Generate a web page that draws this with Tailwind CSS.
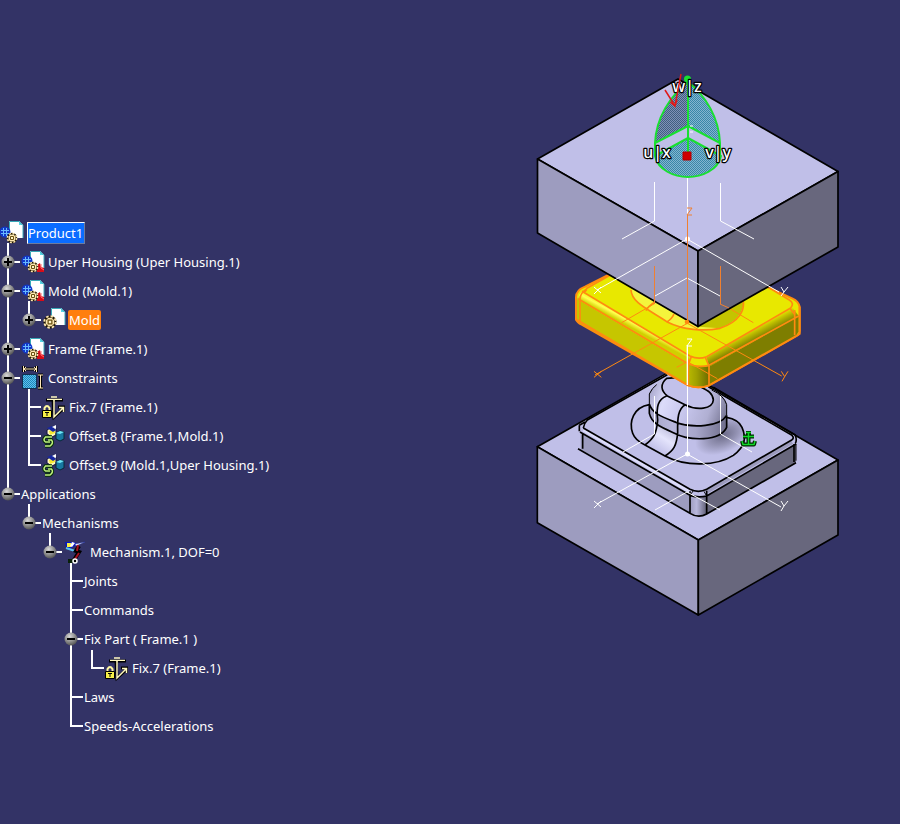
<!DOCTYPE html>
<html lang="en">
<head>
<meta charset="utf-8">
<title>Product1</title>
<script src="https://cdn.jsdelivr.net/npm/@tailwindcss/browser@4"></script>
</head>
<body class="bg-[#333366] text-white text-[13px] leading-5 font-['Noto_Sans',sans-serif]">
<!-- Shared tree glyphs -->
<svg class="absolute w-0 h-0" aria-hidden="true">
  <defs>
    <radialGradient id="ball" cx=".4" cy=".3" r=".75"><stop offset="0" stop-color="#d8d8d8"/><stop offset=".55" stop-color="#8c8c8c"/><stop offset="1" stop-color="#4a4a4a"/></radialGradient>
    <pattern id="dots" width="2" height="2" patternUnits="userSpaceOnUse"><path d="M0 0h2v2H0z" fill="#58c4f0"/><path d="M0 0h1v1H0zM1 1h1v1H1z" fill="#2484b8"/></pattern>
    <g id="page"><path d="M9 3h10l4 4v13H9z" fill="#fff"/><path d="M19 3v4h4z" fill="#58d8e8"/><path d="M9.500 20V3.500H19L23 7.500V20" fill="none" stroke="#38a8b8"/></g>
    <g id="cog">
      <circle r="5.200" fill="#221800"/><circle r="4.600" fill="none" stroke="#ffe8b0" stroke-width="1.500" stroke-dasharray="2 1.600"/>
      <circle r="3.500" fill="#ffe8b0"/><path d="M-1.500-1.500h3v3h-3z" fill="#fff4c8" stroke="#6a5010"/>
    </g>
    <g id="bluecog"><circle r="5.500" fill="#1238c8"/><path d="M-4-1.500h8M-4 1.500h8M-1.500-4v8M1.500-4v8" stroke="#68b8ff" stroke-width="1"/></g>
    <g id="i-product"><use href="#page"/><use href="#bluecog" x="5" y="14"/><use href="#cog" x="12" y="20"/></g>
    <g id="i-comp"><use href="#page" y="1"/><use href="#bluecog" x="6" y="14"/><path d="M16 18l3-2 1 4 3 1v4h-7z" fill="#d80c18"/><path d="M20 17v4l3 2" stroke="#ff7070" fill="none"/><use href="#cog" x="12" y="20"/></g>
    <g id="i-part"><use href="#page"/><use href="#cog" transform="translate(8 17) scale(1.250)"/></g>
    <g id="i-cons"><path d="M2.500 3v6M15.500 3v6M3 6h12" stroke="#000" stroke-width="3"/><path d="M2.500 3v6M15.500 3v6M3 6h12M5 4l-2 2 2 2M13 4l2 2-2 2" stroke="#ffe8b8" fill="none"/><path d="M1.500 11.500h14v14h-14z" fill="url(#dots)" stroke="#103050"/><path d="M17 12h5M17 25h5M19.500 12v13" stroke="#000" stroke-width="3"/><path d="M17 12h5M17 25h5M19.500 12v13" stroke="#ffe8b8"/></g>
    <g id="i-fix"><path d="M11 8L12 25l9-8" fill="none" stroke="#000" stroke-width="3"/><path d="M4 8h17M16 15h5.500v5" stroke="#000" stroke-width="3" fill="none"/><path d="M5 7.500h15M12 7v18l9-9M17 15.500h4.500V20M9 5h6" fill="none" stroke="#fff8c0" stroke-width="1.500"/><path d="M4 8.500h7M13 8.500h8" stroke="#000"/><path d="M2.500 18v-2q2.500-4 5 0v2" fill="none" stroke="#fff8a0" stroke-width="2"/><path d="M.5 18.500h9v7h-9z" fill="#f8f048" stroke="#000"/><path d="M5 20v4M3 20.500h4" stroke="#000"/></g>
    <g id="i-off"><path d="M5 9l5-3 4 1v7l-4 2-5-3z" fill="#fff8c0" stroke="#101040"/><path d="M7 10l6-2v4l-5 2z" fill="#f8e830"/><path d="M5 7l5-2 4 4-3 2z" fill="#1828a0"/><path d="M10 6l4-2v4z" fill="#fff"/><path d="M14 12l4-2 4 1v7l-4 2-4-2z" fill="#1878a0" stroke="#062838"/><path d="M14 12l4-2 4 1-4 2z" fill="#70e8f8"/><path d="M10 16H3.500q-3 3 0 5H8M3 25h5q4-3 1.500-6H6" fill="none" stroke="#083008" stroke-width="3.500"/><path d="M10 16H3.500q-3 3 0 5H8M3 25h5q4-3 1.500-6H6" fill="none" stroke="#c0f080" stroke-width="1.500"/></g>
    <g id="i-mech"><path d="M2 5h9l4 2-8 5-4-2z" fill="#0818c0"/><path d="M4 6h4v4H4z" fill="#f8f040"/><path d="M9 5l3 1-3 4-2-1z" fill="#fff"/><path d="M12 7l10-2-9 4z" fill="#fff" stroke="#2030a0" stroke-width=".5"/><path d="M3 11l12 4" stroke="#58c0f0" stroke-width="2"/><path d="M16 9l-3 5 3 1-5 8" fill="none" stroke="#000" stroke-width="4"/><path d="M15 8l-1 6M16 16l-4 6" stroke="#a81020" stroke-width="2"/><path d="M5 22h5v4H5z" fill="#082008"/><circle cx="12" cy="24" r="2" fill="#000" stroke="#fff" stroke-width="1.500"/></g>
  </defs>
</svg>

<main class="flex min-h-screen items-start justify-between">
  <ul id="tree" role="tree" aria-label="Specification tree" class="shrink-0 pt-[218px]"></ul>

  <!-- Viewport: upper housing, mold and frame, exploded along z -->
  <svg role="img" aria-label="Exploded mold assembly" class="mt-15 mr-10 w-[340px] shrink-0" viewBox="520 60 340 570">
    <defs>
      <linearGradient id="core" x1="0" x2="1"><stop offset="0" stop-color="#a4a3c8"/><stop offset=".3" stop-color="#b8b7dc"/><stop offset=".6" stop-color="#a8a7ca"/><stop offset="1" stop-color="#6e6d8a"/></linearGradient>
      <linearGradient id="dome" gradientUnits="userSpaceOnUse" x1="360" y1="60" x2="595" y2="150"><stop offset="0" stop-color="#a8a7cc"/><stop offset=".2" stop-color="#dcdcfa"/><stop offset=".5" stop-color="#c4c3ea"/><stop offset=".75" stop-color="#b0afd2"/><stop offset="1" stop-color="#6c6b88"/></linearGradient>
      <radialGradient id="flange" gradientUnits="userSpaceOnUse" cx="0" cy="0" r="1" gradientTransform="translate(580 195) rotate(-25) scale(90 52)"><stop offset="0" stop-color="#6c6b88"/><stop offset=".5" stop-color="#9493b4"/><stop offset="1" stop-color="#c0bfe8"/></radialGradient>
      <linearGradient id="sweep" gradientUnits="userSpaceOnUse" x1="350" y1="225" x2="405" y2="140"><stop offset="0" stop-color="#c0bfe8"/><stop offset=".45" stop-color="#e4e4fc"/><stop offset="1" stop-color="#a4a3c8"/></linearGradient>
      <linearGradient id="corner" x1="0" x2="1"><stop offset="0" stop-color="#9d9cbf"/><stop offset=".4" stop-color="#b8b7dc"/><stop offset="1" stop-color="#5f5e74"/></linearGradient>
      <linearGradient id="ycorner" x1="0" x2="1"><stop offset="0" stop-color="#b8b800"/><stop offset=".4" stop-color="#a0a000"/><stop offset="1" stop-color="#6c6c00"/></linearGradient>
      <linearGradient id="yl" gradientUnits="userSpaceOnUse" x1="230" y1="178" x2="216" y2="204"><stop offset="0" stop-color="#ecec00"/><stop offset=".5" stop-color="#ffff50"/><stop offset="1" stop-color="#d0d000"/></linearGradient>
      <linearGradient id="yr" gradientUnits="userSpaceOnUse" x1="564" y1="212" x2="580" y2="242"><stop offset="0" stop-color="#e8e800"/><stop offset=".5" stop-color="#b4b400"/><stop offset="1" stop-color="#848400"/></linearGradient>
      <pattern id="teal" width="2" height="2" patternUnits="userSpaceOnUse"><path d="M0 0h2v2H0z" fill="#84b4d0"/><path d="M0 0h1v1H0zM1 1h1v1H1z" fill="#3888a8"/></pattern>
      <pattern id="slate" width="2" height="2" patternUnits="userSpaceOnUse"><path d="M0 0h2v2H0z" fill="#8090b8"/><path d="M0 0h1v1H0zM1 1h1v1H1z" fill="#406080"/></pattern>
    </defs>

    <!-- Frame -->
    <g transform="translate(530 370) scale(.33333)" stroke="#000" stroke-width="5" stroke-linejoin="round" fill="none">
      <path d="M22 230L443-8 924 270 505 510z" fill="#c0bfe8"/>
      <path d="M22 230L505 510V735L22 458z" fill="#9d9cbf"/>
      <path d="M505 510L924 270V495L505 735z" fill="#68677d"/>
      <path d="M152 188L482 375V432L152 238z" fill="#9d9cbf" stroke="none"/>
      <path d="M530 378L798 222V278L530 432z" fill="#68677d" stroke="none"/>
      <path d="M480 370H530V432Q505 446 480 432z" fill="url(#corner)" stroke="none"/>
      <path d="M148 165L440-5 795 198 798 222 530 378Q505 388 480 376L150 186z" fill="#c0bfe8" stroke="none"/>
      <path d="M160 180L482 367" stroke="#dcdcfa" stroke-width="8"/>
      <path d="M528 366L786 216" stroke="#9c9bbc" stroke-width="12"/>
      <path d="M150 186L480 376Q505 384 530 378L798 222M160 174L480 358Q505 370 530 358L785 210Q794 204 786 196L535 50M160 174Q162 160 172 150L412 14M148 184V166M550 52L795 194Q802 210 796 220M148 166L165 156M158 190V236M144 236L480 430Q505 446 530 432L798 278M792 222V276M480 364V432M530 362V432" stroke-width="5"/>
      <path d="M480 376L490 362M530 378L522 364M798 222V272" stroke-width="3"/>
      <path d="M358 102C310 112 296 155 308 190Q316 212 345 225L405 258C470 292 560 288 610 256C645 230 650 205 636 172Q625 148 590 142z" fill="url(#flange)" stroke="none"/>
      <path d="M383 150C380 192 370 206 345 225L405 258C430 242 440 228 443 185z" fill="url(#sweep)" stroke="none"/>
      <path d="M358 70V130C365 158 385 168 430 188C480 214 570 215 590 172V100C575 70 550 60 540 58L400 28Q365 50 358 70z" fill="url(#core)" stroke="none"/>
      <path d="M358 70V102C366 130 395 140 440 158C490 175 570 170 590 136V104C575 70 550 60 540 58L400 28Q365 50 358 70z" fill="url(#dome)" stroke="none"/>
      <path d="M410 25C390 42 392 62 412 78L465 104C500 122 548 118 550 90C548 65 528 60 500 45L450 22z" fill="#c2c1ea"/>
      <path d="M358 104C310 112 296 155 308 190Q316 212 345 225L405 258C470 292 560 288 610 256C645 230 650 205 636 172Q625 148 590 142M358 102V130C365 158 385 168 430 188C480 214 570 215 590 172V136M358 102C366 130 395 140 440 158C490 175 570 170 590 136M410 78C384 88 378 110 383 150C380 192 370 206 345 225M466 104C444 116 442 145 443 188C440 228 430 242 405 258"/>
      <path d="M358 104V72Q366 54 380 44M590 136V104Q582 76 545 60" stroke-width="3"/>
    </g>
    <!-- Frame axes -->
    <g stroke="#fff" fill="none" stroke-width="1">
      <path d="M687.500 348V454M687 454L597 504M687 454L781 507M654.500 396V434L623 452M720.500 396V434L752 452M655 510L687 492 720 510M594 501l7 6M594 508l7-7"/>
      <circle cx="687.500" cy="454" r="2.500" fill="#fff" stroke="none"/>
      <path d="M781 501l3 5 4-5M784 506l-3 5"/>
    </g>
    <!-- Fix constraint marker -->
    <g fill="none" stroke-linejoin="round"><path d="M748.500 432v13M743 436.500h11M742 441l1 3.500h11l1-3.500M746 433h5" stroke="#002800" stroke-width="4"/><path d="M748.500 432v13M743 436.500h11M742 441l1 3.500h11l1-3.500M746 432.500h5" stroke="#10d828" stroke-width="1.500"/></g>

    <!-- Mold -->
    <g transform="translate(560 260) scale(.33333)" stroke="#ff8a10" stroke-width="6" stroke-linejoin="round" fill="none">
      <path d="M145 45L75 80Q48 90 48 112V178Q52 188 65 194L385 376Q415 388 447 376L710 228Q720 222 719 208V140Q715 124 698 116L625 82 415 0z" fill="#e8e800"/>
      <path d="M50 116L385 314V374L60 190 50 178z" fill="#c6c600" stroke="none"/>
      <path d="M447 320L716 168V214L708 228 447 374z" fill="#7e7e00" stroke="none"/>
      <path d="M385 312Q415 326 447 318V376Q415 388 385 376z" fill="url(#ycorner)" stroke="none"/>
      <path d="M66 92L390 288 385 314 50 116z" fill="url(#yl)" stroke="none"/>
      <path d="M440 292L697 142 716 168 447 320z" fill="url(#yr)" stroke="none"/>
      <path d="M213 90C215 130 270 150 320 185C370 210 430 215 480 205C540 185 553 150 550 125L415 0z" fill="#f4f43c" stroke="none"/>
      <path d="M415 200L552 122C550 158 530 185 480 205z" fill="#c4c400" stroke="none"/>
      <path d="M78 86L150 46M66 94L390 288Q415 300 440 290L692 144Q704 130 688 120L625 82M54 116L385 312Q415 324 447 316L716 168M78 88Q62 98 60 116V186M385 298V375M447 316V375M704 150V226M213 90C215 130 270 150 320 185C370 210 430 215 480 205C540 185 553 150 550 125M258 152Q265 138 285 126M320 186Q335 178 342 162M385 314L394 290M447 318L436 292M705 165L690 145M60 190L48 178M66 94Q76 98 80 88" stroke-width="5"/>
      <path d="M48 112V178L385 376Q415 388 447 376L719 222V140"/>
      <path d="M382 190L105 345M382 190L665 348M285 130L185 188M483 130L580 188M350 322L382 305 472 356" stroke-width="3"/>
      <path d="M102 334l22 18M102 352l22-18M664 334l10 16 10-16M674 350l-8 14" stroke-width="3"/>
      <path d="M382 255V375" stroke="#fff" stroke-width="4"/>
    </g>
    <path d="M687 339h5l-5 7h5" fill="none" stroke="#fff"/>

    <!-- Upper housing -->
    <g stroke="#000" stroke-width="1.700" stroke-linejoin="round">
      <path d="M537.500 159L678 79 838 171.500 698 251z" fill="#c0bfe8"/>
      <path d="M537.500 159L698 251V326.500L537.500 233z" fill="#9d9cbf"/>
      <path d="M698 251L838 171.500V247L698 326.500z" fill="#68677d"/>
    </g>
    <g stroke="#fff" fill="none">
      <path d="M687.500 160V240M687 239L597 290M687 239L779 292M654.500 182V221L622 239M720.500 183V221L754 239M655 296L687 278 720 296M594 287l7 6M594 294l7-7M781 287l3 5 4-5M784 292l-3 4"/>
      <circle cx="687.500" cy="239" r="2.500" fill="#fff" stroke="none"/>
    </g>
    <g stroke="#f08030" fill="none"><path d="M687.500 215V323M654.500 266V304M720.500 266V304M687 208h5l-5 7h5M720 304l9 4"/><circle cx="687" cy="322" r="2.300" fill="#ff8a10" stroke="none"/></g>

    <!-- Compass -->
    <g transform="translate(600 60)" stroke="#18e030" stroke-width="2" stroke-linejoin="round">
      <path d="M88 22C70 36 56 58 55 83L88 66z" fill="url(#slate)"/>
      <path d="M88 22C106 36 119 58 120 83L88 66z" fill="url(#teal)"/>
      <path d="M88 78L55 96C58 110 74 117 88 117S118 110 121 96z" fill="url(#teal)"/>
      <path d="M88 22V95M55 83V96M120 83V96" fill="none"/>
      <circle cx="87.500" cy="19" r="3.500" fill="#18e030" stroke="none"/>
      <path d="M83 92h8v8h-8z" fill="#d00000" stroke="#b00000" stroke-width="1"/>
      <path d="M90 66h3M90 72h3" stroke="#fff" stroke-width="1"/>
    </g>
    <g font-family="Noto Sans, sans-serif" font-size="16" font-weight="500" fill="#fff" stroke="#000" stroke-width="2.500" paint-order="stroke" stroke-linejoin="round" text-anchor="middle">
      <text x="687" y="92">w|z</text><text x="657" y="158">u|x</text><text x="718" y="158">v|y</text>
    </g>
    <path d="M665 90L675 106 681 74M670 102l5 4 2-6" fill="none" stroke="#e01818" stroke-width="1.500"/>
  </svg>
</main>

<script>
// Guide codes, one per 21px column: v line, t tee, e elbow, . blank,
// p and m knobs (expand, collapse); upper case lets the line run on below the knob.
const rows = [
  ['', 'product', 'Product1', 'sel'],
  ['P', 'comp', 'Uper Housing (Uper Housing.1)'],
  ['M', 'comp', 'Mold (Mold.1)'],
  ['vp', 'part', 'Mold', 'hot'],
  ['P', 'comp', 'Frame (Frame.1)'],
  ['M', 'cons', 'Constraints'],
  ['vt', 'fix', 'Fix.7 (Frame.1)'],
  ['vt', 'off', 'Offset.8 (Frame.1,Mold.1)'],
  ['ve', 'off', 'Offset.9 (Mold.1,Uper Housing.1)'],
  ['m', '', 'Applications'],
  ['.m', '', 'Mechanisms'],
  ['..m', 'mech', 'Mechanism.1, DOF=0'],
  ['...t', '', 'Joints'],
  ['...t', '', 'Commands'],
  ['...M', '', 'Fix Part ( Frame.1 )'],
  ['...ve', 'fix', 'Fix.7 (Frame.1)'],
  ['...t', '', 'Laws'],
  ['...e', '', 'Speeds-Accelerations'],
];
const knob = c => `<circle cx="8" cy="15" r="6.500" fill="url(#ball)"/><path d="M4 15h8${c === 'p' ? 'M8 11v8' : ''}" stroke="#000" stroke-width="2"/>`;
const line = d => `<path d="${d}" stroke="#fff" stroke-width="2" fill="none"/>`;
const svg = inner => `<svg width="21" height="29" class="block overflow-visible" aria-hidden="true">${inner}</svg>`;
function cell(c) {
  if (c === '.') return svg('');
  if (c === 'v') return svg(line('M8 0v29'));
  if (c === 't') return svg(line('M8-3v32M8 15h12'));
  if (c === 'e') return svg(line('M8-3v19M8 15h12'));
  const k = c.toLowerCase();
  const d = c === k ? 'M8-4v19h12' : 'M8-4v33M8 15h12';
  return `<button type="button" class="block" aria-label="${k === 'p' ? 'Expand' : 'Collapse'} branch">${svg(line(d) + knob(k))}</button>`;
}
document.getElementById('tree').innerHTML = rows.map(([g, icon, text, mark]) => {
  const label = mark === 'sel'
    ? `<span class="ml-[3px] border border-t-white border-l-white border-r-[#6c7ca0] border-b-[#6c7ca0] bg-[#0a6cff] pr-px">${text}</span>`
    : mark === 'hot'
    ? `<span class="ml-[2px] rounded-xs bg-[#ff7f0e] px-px">${text}</span>`
    : `<span class="${icon ? 'ml-[3px]' : ''}">${text}</span>`;
  const pic = icon ? `<svg width="24" height="29" class="block overflow-visible" aria-hidden="true"><use href="#i-${icon}"/></svg>` : '';
  return `<li role="treeitem" class="flex h-[29px] items-center whitespace-nowrap"${mark === 'sel' ? ' aria-selected="true"' : ''}>${[...g].map(cell).join('')}${pic}${label}</li>`;
}).join('');
</script>
</body>
</html>
